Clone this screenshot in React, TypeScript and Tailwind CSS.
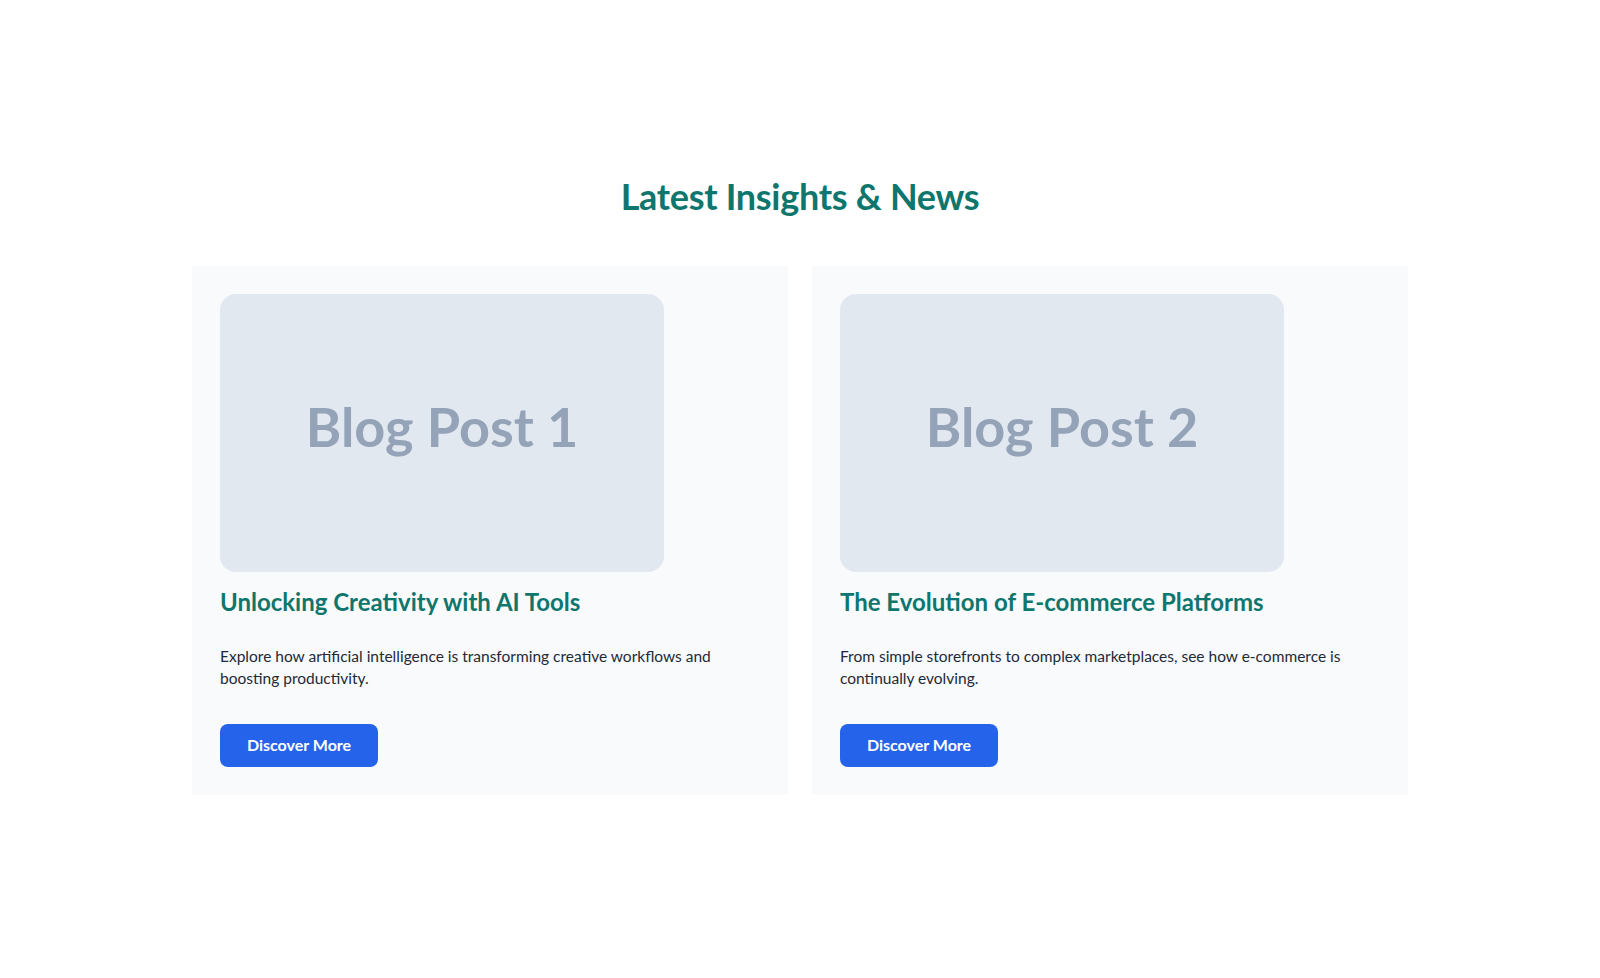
import React from "react";

type Post = {
  label: string;
  title: string;
  excerpt: string;
};

const posts: Post[] = [
  {
    label: "Blog Post 1",
    title: "Unlocking Creativity with AI Tools",
    excerpt:
      "Explore how artificial intelligence is transforming creative workflows and boosting productivity.",
  },
  {
    label: "Blog Post 2",
    title: "The Evolution of E-commerce Platforms",
    excerpt:
      "From simple storefronts to complex marketplaces, see how e-commerce is continually evolving.",
  },
];

function PostCard({ post }: { post: Post }) {
  return (
    <article className="flex flex-col bg-[#f8fafc] p-7">
      <div className="flex h-[278px] w-[444px] items-center justify-center rounded-2xl bg-[#e2e8f0] pb-[12px]">
        <span className="font-['Lato',sans-serif] text-[54px] font-bold leading-none text-[#94a3b8]">
          {post.label}
        </span>
      </div>
      <h3 className="mt-[14px] text-[24px] font-bold leading-8 text-[#0f766e]">
        {post.title}
      </h3>
      <p className="mt-[27px] text-[15.5px] leading-[22.4px] text-[#1f2937]">
        {post.excerpt}
      </p>
      <div className="mt-[34px]">
        <button className="h-[43px] w-[158px] rounded-lg bg-[#2563eb] text-[16px] font-bold text-white">
          Discover More
        </button>
      </div>
    </article>
  );
}

export default function App() {
  return (
    <main className="min-h-[978px] bg-white font-['Lato',sans-serif]">
      <section className="mx-auto max-w-[1280px] px-8 pb-[185px] pt-[176px]">
        <h2 className="text-center text-[36px] font-bold leading-10 tracking-[-0.3px] text-[#0f766e]">
          Latest Insights &amp; News
        </h2>
        <div className="mt-[50px] grid grid-cols-2 gap-6">
          {posts.map((p) => (
            <PostCard key={p.label} post={p} />
          ))}
        </div>
      </section>
    </main>
  );
}
